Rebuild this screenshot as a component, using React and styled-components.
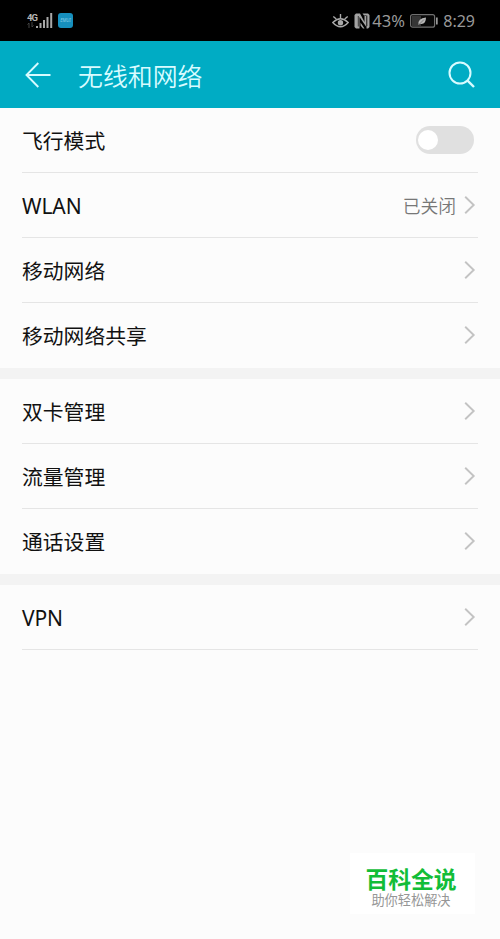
import React from 'react'
import styled, { createGlobalStyle } from 'styled-components'

const groups = [
  [
    { label: '飞行模式', toggle: true },
    { label: 'WLAN', value: '已关闭', latin: true },
    { label: '移动网络' },
    { label: '移动网络共享', last: true },
  ],
  [
    { label: '双卡管理' },
    { label: '流量管理' },
    { label: '通话设置', last: true },
  ],
  [{ label: 'VPN', latin: true }],
]

const App = () => {
  return (
    <Screen>
      <GlobalStyle />
      <StatusBar>
        <StatusSide>
          <Network>
            <NetworkType>4G</NetworkType>
            <ArrowsIcon />
          </Network>
          <SignalIcon />
          <AppBadge>EMUI</AppBadge>
        </StatusSide>
        <StatusSide>
          <StatusIcons>
            <EyeIcon />
            <NfcIcon />
          </StatusIcons>
          <Percent>43%</Percent>
          <BatteryIcon />
          <Clock>8:29</Clock>
        </StatusSide>
      </StatusBar>
      <Header>
        <BackIcon />
        <Title>无线和网络</Title>
        <SearchIcon />
      </Header>
      <List>
        {groups.map((rows, i) => (
          <Group key={i}>
            {rows.map((row) => (
              <Row key={row.label} $last={row.last}>
                <Label $latin={row.latin}>{row.label}</Label>
                {row.value && <Value>{row.value}</Value>}
                {row.toggle ? <Toggle><Knob /></Toggle> : <Chevron />}
              </Row>
            ))}
          </Group>
        ))}
      </List>
      <Watermark>
        <Brand>百科全说</Brand>
        <Slogan>助你轻松解决</Slogan>
      </Watermark>
    </Screen>
  )
}

export default App

const ArrowsIcon = () => (
  <svg width="7" height="6" viewBox="0 0 7 6" fill="none" stroke="#454545">
    <path d="M2 6V1M.5 2.5L2 1M5 0v5M6.5 3.5L5 5" />
  </svg>
)

const SignalIcon = () => (
  <svg width="17" height="16" viewBox="0 0 17 16" fill="#a8a8a8">
    <rect x="0" y="13" width="2" height="2" />
    <rect x="3.5" y="10" width="2" height="5" />
    <rect x="7" y="7" width="2" height="8" />
    <rect x="10.5" y="4" width="2" height="11" />
    <rect x="14.2" y="0" width="2" height="15" />
  </svg>
)

const EyeIcon = () => (
  <svg width="17" height="16" viewBox="0 0 17 16" fill="none" stroke="#aaa" strokeWidth="1.4">
    <path d="M.8 9.5Q8.5 2 16.2 9.5Q8.5 18 .8 9.5Z" />
    <path d="M8.5 5V1M4.3 6L1.3 3.5M12.7 6L15.7 3.5" />
    <circle cx="8.5" cy="9.7" r="2.7" fill="#aaa" stroke="none" />
  </svg>
)

const NfcIcon = () => (
  <svg width="16" height="16" viewBox="0 0 16 16" fill="#a3a3a3">
    <path d="M2 .5H6L10.5 9V3H12V13.5L5.500 4V15.500H2L.5 14V2Z" />
    <path d="M8.500 .5H14L15.500 2V14L14 15.500H10.500L6.500 9.500V12.500L9 15.500H12.500V2.500H10Z" />
    <path d="M4.300 3V13.500M12.900 2.500V13" stroke="#222" strokeWidth=".8" />
  </svg>
)

const BatteryIcon = () => (
  <svg width="28" height="14" viewBox="0 0 28 14">
    <rect x=".6" y=".6" width="24" height="12.6" rx="2" fill="#080808" stroke="#707070" strokeWidth="1.2" />
    <rect x="2" y="2" width="9" height="10" fill="#353535" />
    <path d="M8.5 10.5Q7.5 4.5 16 3.5Q16 11 9.8 9.7L8.8 11Z" fill="#b5b5b5" />
    <path d="M9.5 10L14 5.5" stroke="#555" strokeWidth=".6" />
    <rect x="26" y="3.5" width="1.7" height="7" fill="#999" />
  </svg>
)

const BackIcon = () => (
  <svg width="26" height="26" viewBox="0 0 26 26" fill="none" stroke="#d8fbff" strokeWidth="1.9">
    <path d="M13.3 1L1.5 13L13.3 25M1.5 13H25.5" />
  </svg>
)

const SearchIcon = () => (
  <svg width="28" height="28" viewBox="0 0 28 28" fill="none" stroke="#d8fbff" strokeWidth="2">
    <circle cx="12" cy="12" r="10.5" />
    <path d="M19.3 19.3L26 26" strokeWidth="2.4" />
  </svg>
)

const Chevron = () => (
  <svg width="12" height="20" viewBox="0 0 12 20" fill="none" stroke="#c3c3c3" strokeWidth="1.9">
    <path d="M1.2 1.7L9.7 10L1.2 18.3" />
  </svg>
)

const GlobalStyle = createGlobalStyle`
  body {
    margin: 0;
    background-color: #fcfcfc;
  }
`
const Screen = styled.div`
  position: relative;
  width: 500px;
  height: 939px;
  overflow: hidden;
  background-color: #fcfcfc;
  color: #111;
  font-family: 'Noto Sans', 'Noto Sans CJK SC', sans-serif;
`
const StatusBar = styled.div`
  display: flex;
  align-items: center;
  justify-content: space-between;
  box-sizing: border-box;
  height: 41px;
  padding: 0 25px 0 27px;
  background-color: #000;
`
const StatusSide = styled.div`
  display: flex;
  align-items: center;
`
const StatusIcons = styled.div`
  display: flex;
  align-items: center;
  gap: 5px;
`
const Network = styled.div`
  display: flex;
  flex-direction: column;
  align-items: flex-start;
  width: 9px;
`
const NetworkType = styled.span`
  font: bold 9.5px/9px Roboto, sans-serif;
  letter-spacing: -1px;
  color: #b5b5b5;
`
const AppBadge = styled.div`
  display: flex;
  align-items: center;
  justify-content: center;
  width: 15px;
  height: 15px;
  margin-left: 5px;
  border-radius: 3px;
  background-color: #168fbd;
  color: #8bd0e8;
  font: italic 4.5px/1 'Noto Sans', sans-serif;
`
const Percent = styled.span`
  width: 35px;
  margin: 0 3px 0 2px;
  font-size: 16.5px;
  line-height: 22px;
  color: #999;
`
const Clock = styled.span`
  margin-left: 5px;
  font-size: 16px;
  line-height: 22px;
  color: #999;
`
const Header = styled.div`
  display: flex;
  align-items: center;
  box-sizing: border-box;
  height: 67px;
  padding: 0 24px 0 25px;
  background-color: #00acc4;
`
const Title = styled.div`
  flex: 1;
  margin-left: 27px;
  font-size: 24.9px;
  font-weight: 350;
  line-height: 36px;
  font-family: 'Noto Sans CJK SC', sans-serif;
  color: #d8fbff;
`
const List = styled.div`
  display: flex;
  flex-direction: column;
  gap: 11px;
  background-color: #f3f3f3;
`
const Group = styled.div`
  padding: 0 22px;
  background-color: #fcfcfc;
`
const Row = styled.div`
  display: flex;
  align-items: center;
  box-sizing: border-box;
  height: 65px;
  padding-right: 2px;
  border-bottom: 1px solid ${(props) => (props.$last ? 'transparent' : '#e5e5e5')};
`
const Label = styled.div`
  flex: 1;
  padding-top: 1px;
  font-size: ${(props) => (props.$latin ? '21px' : '20.8px')};
  letter-spacing: ${(props) => (props.$latin ? '-0.1px' : 0)};
  line-height: 30px;
`
const Value = styled.div`
  margin-right: 8px;
  padding-top: 2px;
  font-size: 17.8px;
  font-weight: 350;
  line-height: 26px;
  color: #777;
`
const Toggle = styled.div`
  display: flex;
  align-items: center;
  box-sizing: border-box;
  width: 58px;
  height: 28px;
  margin-right: 2px;
  padding: 0 2px;
  border-radius: 14px;
  background-color: #e0e0e0;
`
const Knob = styled.div`
  width: 20px;
  height: 20px;
  border-radius: 50%;
  background-color: #fff;
`
const Watermark = styled.div`
  position: absolute;
  right: 25px;
  bottom: 25px;
  display: flex;
  flex-direction: column;
  align-items: center;
  box-sizing: border-box;
  width: 125px;
  height: 61px;
  padding: 12px 3px 0 0;
  background-color: #fff;
`
const Brand = styled.div`
  font: bold 22.8px/27px 'Noto Sans CJK SC', sans-serif;
  color: #12bd38;
`
const Slogan = styled.div`
  font: 13.2px/16px 'Noto Sans CJK SC', sans-serif;
  color: #969696;
`
